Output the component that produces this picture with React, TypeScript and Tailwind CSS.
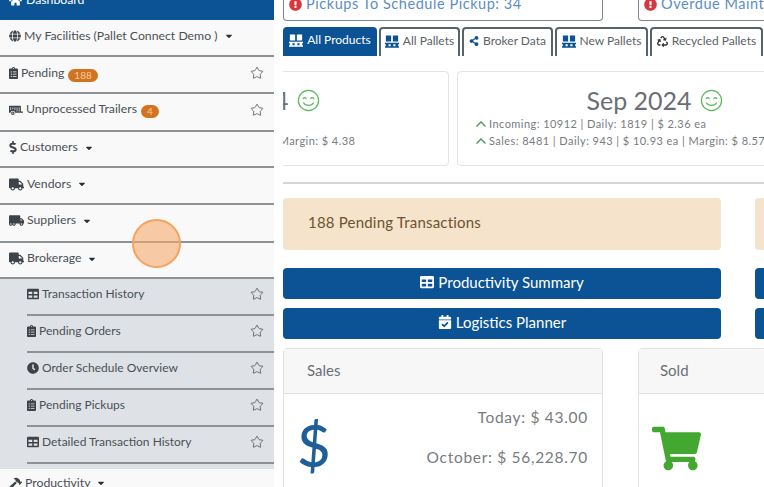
import { FaCalendarCheck, FaCaretDown, FaClipboardList, FaClock, FaDollarSign, FaExclamationCircle, FaGlobe, FaHammer, FaHome, FaRecycle, FaShareAlt, FaShoppingCart, FaTable, FaTrailer, FaTruck, FaTruckMoving } from 'react-icons/fa';
import { Star } from 'lucide-react';
import type { ReactNode } from 'react';

const Pallet = ({ className }: { className?: string }) => (
  <svg viewBox="0 0 16 14" fill="currentColor" className={className}>
    <path d="M1 0h6v7H1zM9 0h6v7H9zM0 8.500h16V10H0zM0 12.500h16V14H0zM1 10h3v3H1zM6.500 10h3v3h-3zM12 10h3v3h-3z" />
  </svg>
);

const Smile = () => (
  <svg viewBox="0 0 24 24" fill="none" stroke="#5cb85c" strokeWidth="1.300" strokeLinecap="round" className="w-[23px] h-[23px] shrink-0">
    <circle cx="12" cy="12" r="10.500" />
    <path d="M6.500 10c.6-1.300 2.400-1.300 3 0M14.500 10c.6-1.300 2.400-1.300 3 0M7 14.500c1.500 3.300 8.500 3.300 10 0" />
  </svg>
);

const Up = () => (
  <svg viewBox="0 0 10 6" fill="none" stroke="#3f9a4c" strokeWidth="1.300" className="w-[10px] h-[6px] shrink-0">
    <path d="M.5 5.500 5 1l4.500 4.500" />
  </svg>
);

const RowStar = () => <Star strokeWidth={1.400} className="ml-auto w-[14px] h-[14px] text-[#50565b]" />;

function Badge({ children }: { children: ReactNode }) {
  return <span className="ml-[4px] mt-[4px] rounded-full bg-[#d2741f] px-[6px] text-[10px] leading-[13px] text-[#f2c9a0]">{children}</span>;
}

function MenuRow({ icon, label, badge, star, caret, h }: { icon: ReactNode; label: string; badge?: string; star?: boolean; caret?: boolean; h: string }) {
  return (
    <div className={`flex items-center pl-[9px] pr-[10px] border-b-2 border-[#8d9296] bg-[#f9f9f9] ${h}`}>
      <span className="text-[#3d4349] mr-[3px]">{icon}</span>
      <span>{label}</span>
      {badge && <Badge>{badge}</Badge>}
      {caret && <FaCaretDown className="ml-[6px] text-[10px] text-[#2b2f33]" />}
      {star && <RowStar />}
    </div>
  );
}

function SubRow({ icon, label }: { icon: ReactNode; label: string }) {
  return (
    <div className="flex items-center h-[37px] pr-[10px] pb-[5px] border-b-2 border-[#8d9296]">
      <span className="text-[#3d4349] mr-[3px]">{icon}</span>
      <span>{label}</span>
      <RowStar />
    </div>
  );
}

function Tab({ icon, label, active, w }: { icon: ReactNode; label: string; active?: boolean; w: string }) {
  return (
    <div className={`flex items-center justify-center gap-[4px] h-[29px] pb-[3px] shrink-0 rounded-t-[4px] text-[12px] ${w} ${active ? 'bg-[#0b5394] text-white' : 'border-2 border-b-0 border-[#59636b] text-[#5a6269] bg-white'}`}>
      <span className={active ? 'text-white' : 'text-[#0b5394]'}>{icon}</span>
      {label}
    </div>
  );
}

function TrendTile({ title, rows, className }: { title: string; rows: string[]; className: string }) {
  return (
    <div className={`w-[395px] h-[95px] shrink-0 rounded-[4px] border border-[#e3e3e3] pt-[13px] ${className}`}>
      <div className="flex items-center justify-center gap-[8px] text-[25px] leading-[30px] text-[#6a6f74]">
        {title}
        <Smile />
      </div>
      <div className="pl-[18px] text-[11px] leading-[17px] tracking-[0.450px] text-[#777c80]">
        {rows.map((r) => (
          <div key={r} className="flex items-center gap-[3px] whitespace-nowrap"><Up />{r}</div>
        ))}
      </div>
    </div>
  );
}

function BlueButton({ icon, label }: { icon: ReactNode; label: string }) {
  return (
    <div className="flex items-center justify-center gap-[4px] w-[438px] h-[31px] pb-[3px] shrink-0 rounded-[4px] bg-[#0b5394] text-white text-[15px]">
      <span className="text-[14px]">{icon}</span>
      {label}
    </div>
  );
}

export default function App() {
  return (
    <div className="relative flex w-[764px] h-[487px] overflow-hidden bg-white font-['Lato','Open_Sans',sans-serif]">
      {/* sidebar */}
      <div className="w-[274px] shrink-0 text-[12.250px] text-[#4a5056]">
        <div className="flex items-center h-[20px] pl-[9px] bg-[#0b5394] text-white">
          <FaHome className="mr-[4px] text-[13px] -mt-[19px]" />
          <span className="-mt-[19px]">Dashboard</span>
        </div>
        <MenuRow h="h-[37px] pb-[3px]" icon={<FaGlobe className="w-[12px] h-[12px]" />} label="My Facilities (Pallet Connect Demo )" caret />
        <MenuRow h="h-[37px] pb-[3px]" icon={<FaClipboardList className="w-[9px] h-[12px]" />} label="Pending" badge="188" star />
        <MenuRow h="h-[38px] pb-[5px]" icon={<FaTrailer className="w-[14px] h-[12px]" />} label="Unprocessed Trailers" badge="4" star />
        <MenuRow h="h-[36px] pb-[3px]" icon={<FaDollarSign className="w-[8px] h-[13px]" />} label="Customers" caret />
        <MenuRow h="h-[37px] pb-[3px]" icon={<FaTruck className="w-[15px] h-[13px]" />} label="Vendors" caret />
        <MenuRow h="h-[38px] pb-[5px]" icon={<FaTruckMoving className="w-[15px] h-[13px]" />} label="Suppliers" caret />
        <MenuRow h="h-[36px] pb-[3px]" icon={<FaTruck className="w-[15px] h-[13px]" />} label="Brokerage" caret />
        <div className="bg-[#dee2e6] pl-[27px] h-[190px] text-[12px]">
          <SubRow icon={<FaTable className="w-[12px] h-[12px]" />} label="Transaction History" />
          <SubRow icon={<FaClipboardList className="w-[9px] h-[12px]" />} label="Pending Orders" />
          <SubRow icon={<FaClock className="w-[12px] h-[12px]" />} label="Order Schedule Overview" />
          <SubRow icon={<FaClipboardList className="w-[9px] h-[12px]" />} label="Pending Pickups" />
          <SubRow icon={<FaTable className="w-[12px] h-[12px]" />} label="Detailed Transaction History" />
        </div>
        <div className="flex items-center pl-[9px] pt-[8px] h-[20px] bg-[#f9f9f9]">
          <FaHammer className="mr-[3px] w-[13px] h-[13px] text-[#3d4349]" />
          Productivity
          <FaCaretDown className="ml-[6px] text-[10px] text-[#2b2f33]" />
        </div>
      </div>

      {/* main */}
      <div className="ml-[9px] flex-1 min-w-0 overflow-hidden flex flex-col">
        <div className="flex gap-[35px] shrink-0 h-[21px] text-[14.500px] tracking-[0.550px] text-[#5b8ec2]">
          <div className="flex items-end gap-[4px] w-[320px] shrink-0 h-full rounded-b-[4px] border-x border-b border-[#7d868c] pl-[5px] leading-[20px] pb-[6px]">
            <FaExclamationCircle className="text-[#d9363e] text-[13px] mb-[3px]" />
            Pickups To Schedule Pickup: 34
          </div>
          <div className="flex items-end gap-[4px] w-[320px] shrink-0 h-full rounded-b-[4px] border-x border-b border-[#7d868c] pl-[5px] leading-[20px] pb-[6px]">
            <FaExclamationCircle className="text-[#d9363e] text-[13px] mb-[3px]" />
            Overdue Maintenance
          </div>
        </div>
        <div className="flex gap-[2px] mt-[6px] shrink-0">
          <Tab active w="w-[94px]" icon={<Pallet className="w-[14px] h-[13px]" />} label="All Products" />
          <Tab w="w-[81px]" icon={<Pallet className="w-[14px] h-[13px]" />} label="All Pallets" />
          <Tab w="w-[91px]" icon={<FaShareAlt className="text-[10px]" />} label="Broker Data" />
          <Tab w="w-[93px]" icon={<Pallet className="w-[14px] h-[13px]" />} label="New Pallets" />
          <Tab w="w-[113px]" icon={<FaRecycle className="text-[11px] !text-[#333]" />} label="Recycled Pallets" />
        </div>
        <div className="flex gap-[8px] mt-[15px] shrink-0">
          <TrendTile className="-ml-[229px]" title="Oct 2024" rows={['Incoming: 230 | Daily: 115 | $ 2 ea', 'Sales: 1954 | Daily: 97 | $ 10.82 ea | Margin: $ 4.38']} />
          <TrendTile className="" title="Sep 2024" rows={['Incoming: 10912 | Daily: 1819 | $ 2.36 ea', 'Sales: 8481 | Daily: 943 | $ 10.93 ea | Margin: $ 8.57']} />
        </div>
        <div className="mt-[16px] h-[2px] shrink-0 bg-[#d4d6d8]" />
        <div className="flex gap-[34px] mt-[14px] shrink-0">
          <div className="w-[438px] h-[52px] pb-[3px] shrink-0 rounded-[4px] bg-[#f5e3cb] pl-[25px] flex items-center text-[15px] tracking-[0.200px] text-[#6e5330]">188 Pending Transactions</div>
          <div className="w-[438px] h-[52px] shrink-0 rounded-[4px] bg-[#f5e3cb]" />
        </div>
        <div className="flex gap-[34px] mt-[18px] shrink-0">
          <BlueButton icon={<FaTable />} label="Productivity Summary" />
          <div className="w-[438px] h-[31px] shrink-0 rounded-[4px] bg-[#0b5394]" />
        </div>
        <div className="flex gap-[34px] mt-[9px] shrink-0">
          <BlueButton icon={<FaCalendarCheck />} label="Logistics Planner" />
          <div className="w-[438px] h-[31px] shrink-0 rounded-[4px] bg-[#0b5394]" />
        </div>
        <div className="flex gap-[35px] mt-[9px] shrink-0">
          <div className="w-[320px] h-[160px] shrink-0 rounded-[4px] border border-[#e2e2e2]">
            <div className="h-[45px] pb-[2px] flex items-center pl-[23px] bg-[#f7f7f7] border-b border-[#e2e2e2] text-[15px] text-[#6a6f74]">Sales</div>
            <div className="flex justify-between pl-[13px] pr-[14px] pt-[10px]">
              <span className="text-[#1f5f99] text-[58px] leading-[56px] mt-[13px] font-medium">$</span>
              <div className="text-right text-[15.500px] leading-[26px] tracking-[0.700px] text-[#777c80]">
                <div>Today: $ 43.00</div>
                <div className="mt-[14px]">October: $ 56,228.70</div>
              </div>
            </div>
          </div>
          <div className="w-[320px] h-[160px] shrink-0 rounded-[4px] border border-[#e2e2e2]">
            <div className="h-[45px] pb-[2px] flex items-center pl-[21px] bg-[#f7f7f7] border-b border-[#e2e2e2] text-[15px] text-[#6a6f74]">Sold</div>
            <div className="pl-[13px] pt-[30px]">
              <FaShoppingCart className="text-[#43a82f] text-[49px]" />
            </div>
          </div>
        </div>
      </div>

      {/* tap marker */}
      <div className="absolute left-[132px] top-[219px] w-[49px] h-[49px] rounded-full bg-[#f6a96c]/60 border-2 border-[#f3a25f]" />
    </div>
  );
}
